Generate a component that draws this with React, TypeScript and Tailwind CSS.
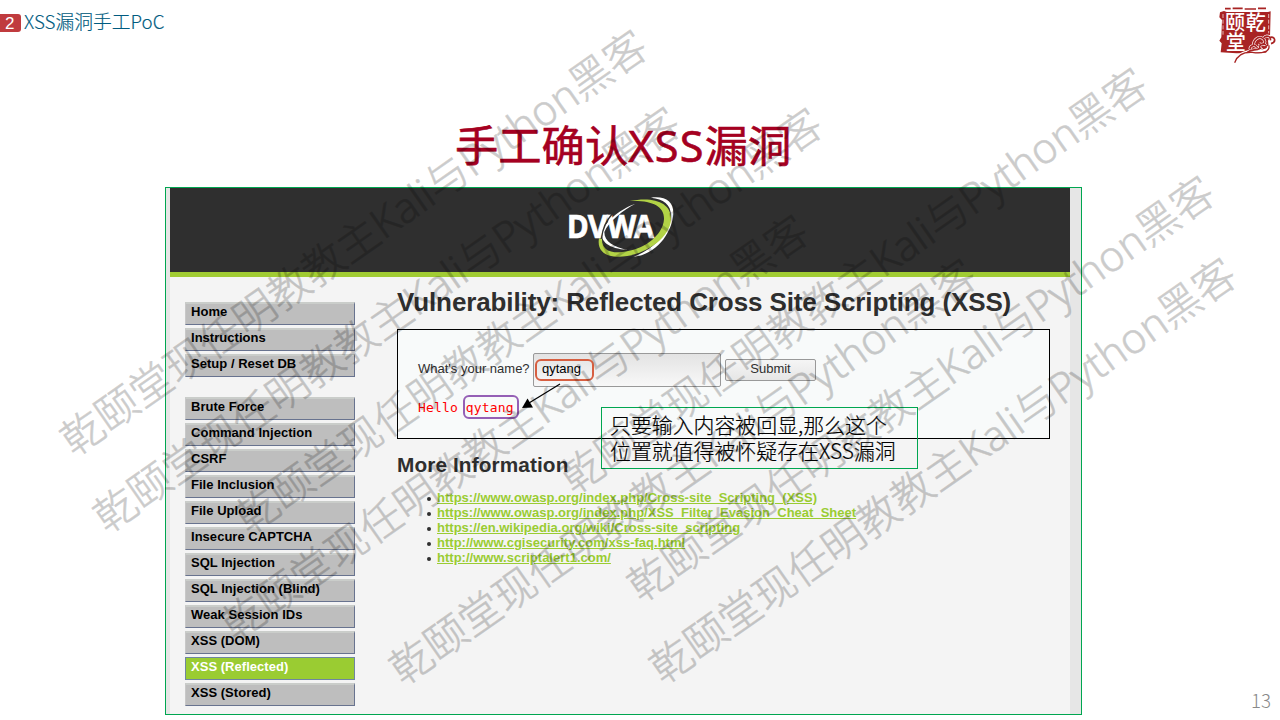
import React from "react";

const marks = [
  { x: 82, y: 432 },
  { x: 115, y: 509 },
  { x: 257, y: 510 },
  { x: 243, y: 617 },
  { x: 411, y: 661 },
  { x: 582, y: 470 },
  { x: 649, y: 578 },
  { x: 671, y: 660 },
];

const menuTop = ["Home", "Instructions", "Setup / Reset DB"];
const menuMain = [
  "Brute Force",
  "Command Injection",
  "CSRF",
  "File Inclusion",
  "File Upload",
  "Insecure CAPTCHA",
  "SQL Injection",
  "SQL Injection (Blind)",
  "Weak Session IDs",
  "XSS (DOM)",
  "XSS (Reflected)",
  "XSS (Stored)",
];
const links = [
  "https://www.owasp.org/index.php/Cross-site_Scripting_(XSS)",
  "https://www.owasp.org/index.php/XSS_Filter_Evasion_Cheat_Sheet",
  "https://en.wikipedia.org/wiki/Cross-site_scripting",
  "http://www.cgisecurity.com/xss-faq.html",
  "http://www.scriptalert1.com/",
];

function MenuItem({ label }: { label: string }) {
  const active = label === "XSS (Reflected)";
  return (
    <li
      className={
        active
          ? "h-[23px] border border-[#6f86a0] bg-[#9acc32] pl-[5px] text-[13px] leading-[18px] font-bold text-white"
          : "h-[23px] border-t-2 border-r border-b border-l border-t-[#cacdca] border-r-[#68738f] border-b-[#68738f] border-l-[#c8c8c8] bg-[#bebebe] pl-[5px] text-[13px] leading-[16px] font-bold text-black"
      }
    >
      {label}
    </li>
  );
}

function DvwaLogo() {
  return (
    <svg className="mt-[7px] ml-[397px] h-[63.33px] w-[108.33px] overflow-visible" viewBox="380 255 325 190">
      <path d="M632 263C675 257 700 275 699 310C697 365 650 435 580 440C640 418 690 365 692 318C693 285 670 267 632 263Z" fill="#fff" />
      <path d="M568 273C640 258 694 278 692 328C689 390 600 445 525 440C490 438 470 418 476 385L485 387C484 412 500 428 538 427C610 423 668 376 671 328C673 288 635 270 568 273Z" fill="#b2d346" />
      <path d="M585 281C545 295 497 330 486 364C478 395 505 416 562 420C520 411 492 395 492 366C505 333 550 300 585 281Z" fill="#fff" />
      <g fill="#fff" stroke="#fff" strokeWidth="2" fontFamily="Noto Sans, sans-serif" fontWeight="700" fontSize="97">
        <text x="380" y="384" textLength="65" lengthAdjust="spacingAndGlyphs">D</text>
        <text x="442" y="384" textLength="60" lengthAdjust="spacingAndGlyphs">V</text>
        <text x="500" y="384" textLength="88" lengthAdjust="spacingAndGlyphs">W</text>
        <text x="581" y="384" textLength="60" lengthAdjust="spacingAndGlyphs">A</text>
      </g>
      <path d="M518 309C501 328 487 350 484 384" fill="none" stroke="#2f2f2f" strokeWidth="4" />
    </svg>
  );
}

const cloud =
  "M150 148C150 136 165 132 170 142M160 137C160 117 178 106 190 117C202 127 187 139 177 130M191 114C198 104 214 108 211 121M207 113C226 106 230 126 213 131M142 157C157 145 165 154 181 145C172 138 190 126 198 136";

function Seal() {
  return (
    <svg className="absolute top-0 left-[1200px] h-[70px] w-[80px]" viewBox="0 0 240 210">
      <path d="M75 26H92M98 25H128M134 27H168M174 25H198" stroke="#a82323" strokeWidth="5" fill="none" />
      <path d="M60 37L72 33L80 36H204L212 34L210 112L204 122L207 146L198 158L110 160L62 157L65 130L58 122L64 112L66 60L58 52Z" fill="#a82323" />
      <path d="M69 42V104M206 42V100" stroke="#fff" strokeWidth="2" strokeDasharray="12 5" fill="none" />
      <g fill="#fff" fontFamily="Noto Sans CJK SC, sans-serif" fontWeight="500">
        <text x="75" y="91" fontSize="60">颐</text>
        <text x="137" y="91" fontSize="60">乾</text>
        <text x="77" y="151" fontSize="60">堂</text>
      </g>
      <path d={cloud} fill="none" stroke="#fff" strokeWidth="9" />
      <path d="M104 188C113 164 130 154 157 154C185 154 210 151 204 138" fill="none" stroke="#fff" strokeWidth="8" />
      <path d={cloud} fill="none" stroke="#a82323" strokeWidth="5" />
      <path d="M104 188C113 164 130 155 157 157C185 162 210 156 207 136" fill="none" stroke="#a82323" strokeWidth="4" />
    </svg>
  );
}

export default function App() {
  return (
    <main className="relative flex h-[720px] w-[1280px] flex-col overflow-hidden bg-white font-['Liberation_Sans',sans-serif] text-[#2f2f2f]">
      <header className="flex h-11 items-center gap-[3px] font-['Noto_Sans_CJK_SC',sans-serif]">
        <span className="mt-[2px] flex h-[18px] w-[21px] items-center rounded-r-[3px] bg-[#c03b3e] pl-[5px] font-['Liberation_Sans',sans-serif] text-[17px] leading-none text-white">2</span>
        <span className="-mt-[2px] text-[18.8px] leading-none font-light whitespace-nowrap text-[#005b80] [-webkit-text-stroke:0.15px]">XSS漏洞手工PoC</span>
      </header>
      <h1 className="ml-[455px] h-[143px] pt-[72px] font-['Noto_Sans','Noto_Sans_CJK_SC',sans-serif] text-[43.3px] leading-[60px] font-normal whitespace-nowrap text-[#a50021] [-webkit-text-stroke:0.6px]">
        手工确认<span className="tracking-[1.2px]">XSS</span>漏洞
      </h1>

      <section className="ml-[165px] flex h-[528px] w-[917px] shrink-0 border border-[#00a650] bg-[#e6e6e6] pl-1">
        <div className="flex w-[900px] flex-col bg-[#f4f4f4]">
          <div className="h-[89px] shrink-0 border-b-[5px] border-[#a1cc33] bg-[#2f2f2f]">
            <DvwaLogo />
          </div>
          <div className="flex">
            <nav className="ml-[15px] flex w-[170px] flex-col gap-[20px] pt-[25px] tracking-[0.03px]">
              <ul className="flex flex-col gap-[3px]">
                {menuTop.map((m) => <MenuItem key={m} label={m} />)}
              </ul>
              <ul className="flex flex-col gap-[3px]">
                {menuMain.map((m) => <MenuItem key={m} label={m} />)}
              </ul>
            </nav>
            <div className="ml-[42px] flex w-[653px] flex-col">
              <h2 className="mt-[10px] h-[42px] text-[26px] leading-[30px] font-bold tracking-[-0.12px] whitespace-nowrap">
                Vulnerability: Reflected Cross Site Scripting (XSS)
              </h2>
              <div className="h-[110px] border border-black bg-[#f8fafa] pt-[23px] pl-[20px] text-[13px]">
                <div className="flex h-[34px] items-center">
                  <span className="w-[115px] pb-[2px] leading-4 whitespace-nowrap">What's your name?</span>
                  <span className="flex h-[34px] w-[188px] items-center rounded-[2px] border border-[#999] bg-linear-to-b from-[#e3e3e3] to-[#f8f8f8] pb-[2px] pl-[8px] leading-4 text-black">
                    qytang
                  </span>
                  <span className="ml-1 flex h-[22px] w-[91px] items-center justify-center rounded-[2px] border border-[#999] bg-linear-to-b from-[#f5f5f5] to-[#e6e6e6] pb-[2px]">
                    Submit
                  </span>
                </div>
                <pre className="mt-[13px] font-['DejaVu_Sans_Mono',monospace] text-[13px] leading-4 tracking-[0.15px] text-[#ff0000]">Hello qytang</pre>
              </div>
              <h3 className="mt-[14px] text-[20.8px] leading-6 font-bold tracking-[0.1px]">More Information</h3>
              <ul className="mt-[13px] ml-[40px] text-[13px] leading-[15px] font-bold text-[#9acc32]">
                {links.map((l) => (
                  <li key={l} className="flex items-center tracking-[0.01px] whitespace-nowrap">
                    <span className="mt-[2px] mr-[6px] -ml-[10px] size-1 rounded-full bg-[#2f2f2f]" />
                    <span className="underline">{l}</span>
                  </li>
                ))}
              </ul>
            </div>
          </div>
        </div>
      </section>

      <span className="absolute top-[359px] left-[535px] h-[22px] w-[59px] rounded-[6px] border-2 border-[#d75f41]" />
      <span className="absolute top-[395px] left-[463px] h-[24px] w-[56px] rounded-[6px] border-2 border-[#955fb5]" />
      <svg className="absolute top-[380px] left-[518px] h-[32px] w-[46px]" viewBox="0 0 46 32">
        <path d="M42 4L11 23" stroke="#000" strokeWidth="1.2" />
        <path d="M4 28L9.500 18.500L15 27.500Z" fill="#000" />
      </svg>
      <p className="absolute top-[407px] left-[601px] h-[62px] w-[317px] border border-[#00a650] pt-[3px] pl-[8px] font-['Noto_Sans_CJK_SC',sans-serif] text-[20.9px] leading-[26px] font-light whitespace-nowrap text-black [-webkit-text-stroke:0.2px]">
        只要输入内容被回显,那么这个
        <br />
        位置就值得被怀疑存在XSS漏洞
      </p>

      <Seal />
      <span className="absolute right-[9px] bottom-[8px] font-['Noto_Sans_CJK_SC',sans-serif] text-[18.7px] leading-6 font-light text-[#898989]">13</span>

      {marks.map((m) => (
        <span
          key={m.x}
          className="pointer-events-none absolute -mt-[32px] -ml-[21px] h-[64px] origin-[21px_32px] -rotate-35 font-['Noto_Sans','Noto_Sans_CJK_SC',sans-serif] text-[42px] leading-[64px] font-light whitespace-nowrap text-black opacity-20 [-webkit-text-stroke:0.6px]"
          style={{ left: m.x, top: m.y }}
        >
          乾颐堂现任明教教主Kali与Python黑客
        </span>
      ))}
    </main>
  );
}
